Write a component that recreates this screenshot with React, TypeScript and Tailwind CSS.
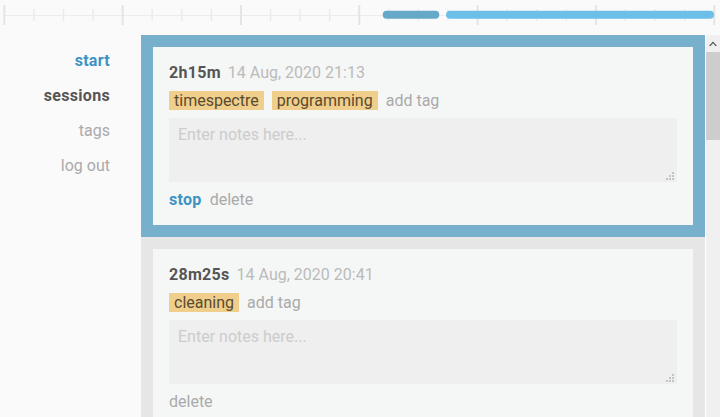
import React from "react";

const ticks = Array.from({ length: 25 }, (_, k) => k);

function Timeline() {
  const x0 = 4.3;
  const step = 29.58;
  return (
    <svg width="720" height="35" viewBox="0 0 720 35" className="block">
      <line x1={x0} y1={15.5} x2={714} y2={15.5} stroke="#ececec" strokeWidth={1} />
      {ticks.map((k) => {
        const x = x0 + k * step;
        const major = k % 4 === 0;
        return (
          <line
            key={k}
            x1={x}
            x2={x}
            y1={major ? 5 : 9}
            y2={major ? 25 : 21}
            stroke={major ? "#e4e4e4" : "#ebebeb"}
            strokeWidth={major ? 2 : 1.5}
          />
        );
      })}
      <rect x={382.7} y={10.7} width={56.6} height={8} rx={4} fill="#66a8c8" />
      <rect x={446} y={10.7} width={268} height={8} rx={4} fill="#6cbfe8" />
    </svg>
  );
}

function Grip() {
  const dots: [number, number][] = [
    [6, 0],
    [3, 3],
    [6, 3],
    [0, 6],
    [3, 6],
    [6, 6],
  ];
  return (
    <svg
      width="8"
      height="8"
      viewBox="0 0 8 8"
      className="pointer-events-none absolute bottom-[2px] right-[3px]"
    >
      {dots.map(([x, y], i) => (
        <rect key={i} x={x} y={y} width={2} height={2} fill="#c4c4c4" />
      ))}
    </svg>
  );
}

function Card({
  duration,
  date,
  tags,
  running,
}: {
  duration: string;
  date: string;
  tags: string[];
  running?: boolean;
}) {
  return (
    <div className="bg-[#f5f7f6] px-4 pt-4 pb-[15px]">
      <div className="flex items-baseline text-[16px] leading-[20px]">
        <span className="font-bold tracking-[0.3px] text-[#555555]">{duration}</span>
        <span className="ml-[7px] text-[#bbbbbb]">{date}</span>
      </div>
      <div className="mt-2 flex items-center gap-2 text-[16px] leading-[19px]">
        {tags.map((t) => (
          <span key={t} className="bg-[#f0cf8c] px-[5px] text-[#5a4b30]">
            {t}
          </span>
        ))}
        <span className="text-[#aaaaaa]">add tag</span>
      </div>
      <div className="relative mt-2">
        <textarea
          placeholder="Enter notes here..."
          className="block h-[64px] w-full resize-none bg-[#eeefee] px-[9px] pt-[7px] text-[16px] leading-[19px] text-[#555555] outline-none placeholder:text-[#cccccc]"
        />
        <Grip />
      </div>
      <div className="mt-2 flex gap-2 text-[16px] leading-[20px]">
        {running && <span className="font-bold tracking-[0.3px] text-[#3d93c4]">stop</span>}
        <span className="text-[#aaaaaa]">delete</span>
      </div>
    </div>
  );
}

export default function App() {
  return (
    <div
      className="flex h-[417px] w-[720px] flex-col overflow-hidden bg-[#fafafa]"
      style={{ fontFamily: "Roboto, 'Noto Sans', sans-serif" }}
    >
      <header className="h-[35px] shrink-0">
        <Timeline />
      </header>
      <div className="flex min-h-0 flex-1">
        <nav className="flex w-[141px] shrink-0 flex-col items-end pr-[31px] pt-2 text-[16px] leading-[35px]">
          <span className="font-bold tracking-[0.3px] text-[#3d93c4]">start</span>
          <span className="font-bold tracking-[0.3px] text-[#555555]">sessions</span>
          <span className="text-[#aaaaaa]">tags</span>
          <span className="text-[#aaaaaa]">log out</span>
        </nav>
        <main className="min-w-0 flex-1 overflow-hidden bg-[#e6e6e6]">
          <div className="bg-[#77b0cd] p-3">
            <Card
              duration="2h15m"
              date="14 Aug, 2020 21:13"
              tags={["timespectre", "programming"]}
              running
            />
          </div>
          <div className="p-3">
            <Card duration="28m25s" date="14 Aug, 2020 20:41" tags={["cleaning"]} />
          </div>
        </main>
        <div className="flex w-[15px] shrink-0 flex-col border-l border-white bg-[#f0f0f0]">
          <div className="flex h-[17px] items-center justify-center">
            <svg width="8" height="5" viewBox="0 0 8 5">
              <path d="M0 5 L4 0.5 L8 5 L6.5 5 L4 2.3 L1.5 5 Z" fill="#505050" />
            </svg>
          </div>
          <div className="h-[88px] bg-[#cdcdcd]" />
        </div>
      </div>
    </div>
  );
}
